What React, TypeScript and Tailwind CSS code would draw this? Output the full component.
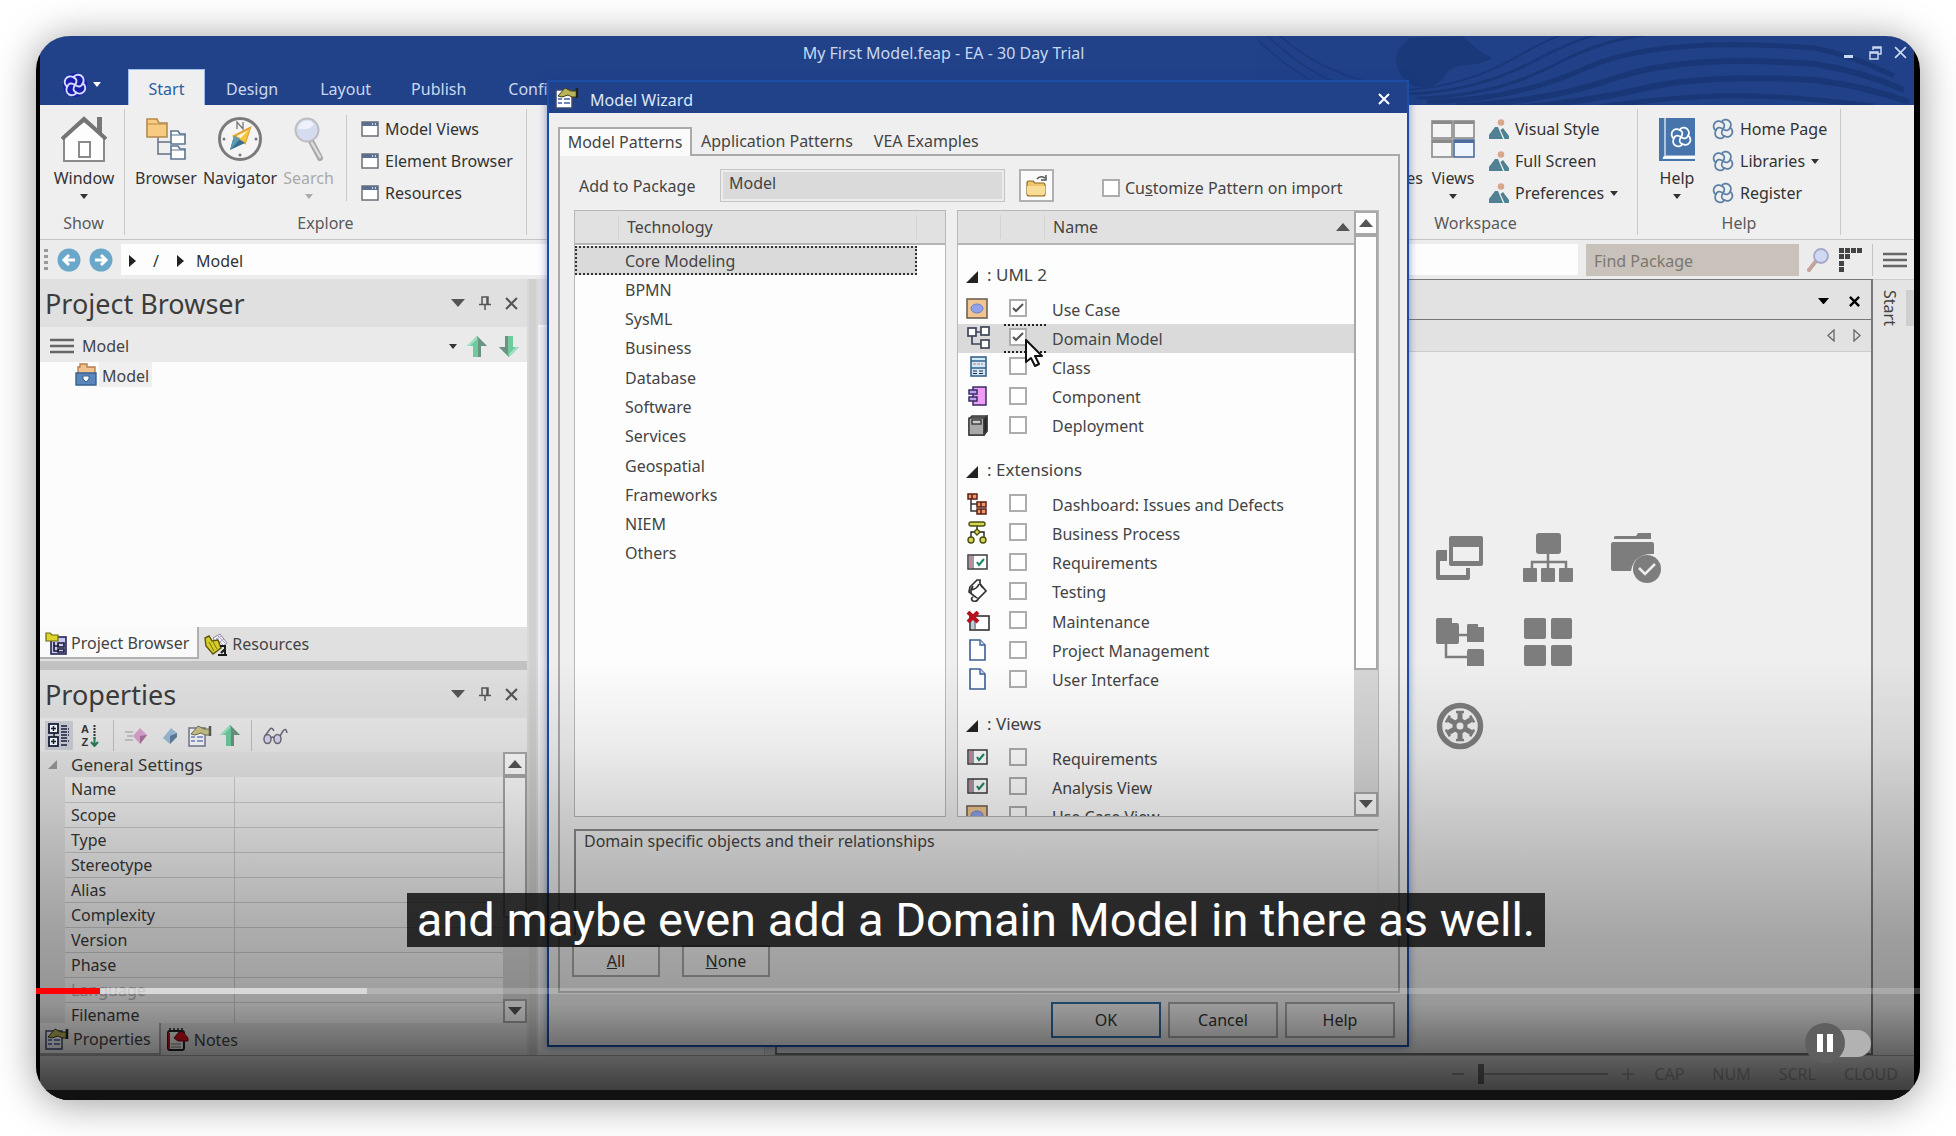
import React from "react";

type Kids = { children?: React.ReactNode };

/* ---------- icons ---------- */

const Logo = ({ color, size = 20, bg }: { color: string; size?: number; bg?: string }) => (
  <svg width={size} height={size} viewBox="0 0 20 20" fill="none" aria-hidden="true">
    {bg && <circle cx="10" cy="10" r="10" fill={bg} />}
    <g stroke={color} strokeWidth="1.6" strokeLinejoin="round" transform="rotate(-12 10 10)">
      <path d="M10 3.400A4 4 0 0 1 16.600 10A4 4 0 0 1 10 16.600A4 4 0 0 1 3.400 10A4 4 0 0 1 10 3.400Z" />
      <path d="M10 3.400Q14 6 10 10Q6 14 10 16.600M16.600 10Q14 14 10 10Q6 6 3.400 10" />
    </g>
  </svg>
);

const Caret = ({ className = "text-[#333]", w = 8 }: { className?: string; w?: number }) => (
  <svg width={w} height={w / 2 + 1} viewBox="0 0 8 5" className={className} preserveAspectRatio="none" aria-hidden="true">
    <path d="M0 0H8L4 5Z" fill="currentColor" />
  </svg>
);

const House = () => (
  <svg width="46" height="47" viewBox="0 0 46 47" aria-hidden="true">
    <rect x="36" y="1" width="5" height="17" fill="#777" />
    <path d="M3 21 23 5 43 21V45H3Z" fill="#fdfdfd" stroke="#8a8a8a" strokeWidth="2" />
    <path d="M1 23 23 3 45 23" fill="none" stroke="#747474" strokeWidth="4" />
    <rect x="18" y="26" width="11" height="15" fill="#fff" stroke="#8a8a8a" strokeWidth="2" />
  </svg>
);

const TreeFolders = () => (
  <svg width="40" height="42" viewBox="0 0 40 42" fill="none" aria-hidden="true">
    <path d="M12 19V36H25M12 24H25" stroke="#667085" strokeWidth="1.5" />
    <path d="M1 19V1H11L13 5H21V19Z" fill="#f8cb82" stroke="#b58a4c" strokeWidth="1.6" />
    <path d="M1 6H21" stroke="#b58a4c" strokeWidth="1.2" />
    <path d="M25 26V13H32L34 16H39V26ZM25 41V28H32L34 31H39V41Z" fill="#fff" stroke="#5b7592" strokeWidth="1.6" />
    <path d="M25 17H39M25 32H39" stroke="#5b7592" />
  </svg>
);

const Compass = () => (
  <svg width="46" height="46" viewBox="0 0 46 46" aria-hidden="true">
    <circle cx="23" cy="23" r="20.500" fill="#f4f4f4" stroke="#7b7b7b" strokeWidth="3" />
    <path d="M20 13V6L26 13V6" fill="none" stroke="#777" strokeWidth="1.300" />
    <circle cx="7" cy="23" r="1.500" fill="#777" />
    <circle cx="39" cy="23" r="1.500" fill="#777" />
    <circle cx="23" cy="39" r="1.500" fill="#777" />
    <path d="M33 12 17 20 23 23 28 27Z" fill="#fff6d8" stroke="#e6a02c" strokeWidth="2" />
    <path d="M23 23 33 12 28 27Z" fill="#f3c43c" />
    <path d="M13 34 17 20 28 27Z" fill="#33718f" />
    <path d="M17 20 23 23 13 34Z" fill="#5d9ab3" />
  </svg>
);

const BigSearch = () => (
  <svg width="30" height="46" viewBox="0 0 30 46" aria-hidden="true">
    <path d="M17 25 26 42" stroke="#a9a9a9" strokeWidth="6" strokeLinecap="round" />
    <path d="M18 27 26 41" stroke="#dedede" strokeWidth="2.500" strokeLinecap="round" />
    <circle cx="13" cy="14" r="11.500" fill="#d6dcf0" stroke="#bdbdc2" strokeWidth="2" />
    <path d="M4 13A9 9 0 0 1 20 8C14 16 9 12 4 13Z" fill="#eef1fa" />
  </svg>
);

const WinIcon = () => (
  <svg width="18" height="16" viewBox="0 0 18 16" aria-hidden="true">
    <rect x="1" y="1" width="16" height="14" fill="#fff" stroke="#6b6f78" strokeWidth="1.500" />
    <rect x="1" y="1" width="16" height="4" fill="#5b6f8f" />
    <path d="M11 3H12M14 3H15" stroke="#fff" strokeWidth="1.500" />
  </svg>
);

const ViewsIcon = () => (
  <svg width="44" height="38" viewBox="0 0 44 38" aria-hidden="true">
    {[[1, 1, "#8a8a8a", "#f4f4f4"], [23, 1, "#8a8a8a", "#f4f4f4"], [1, 20, "#8a8a8a", "#f4f4f4"], [23, 20, "#4b6c9c", "#eef4fd"]].map(([x, y, c, f]) => (
      <g key={`${x}-${y}`}>
        <rect x={x} y={y} width="20" height="17" fill={f as string} stroke={c as string} strokeWidth="1.600" />
        <rect x={x} y={y} width="20" height="3" fill={c as string} />
      </g>
    ))}
  </svg>
);

const Scenery = () => (
  <svg width="20" height="20" viewBox="0 0 20 20" aria-hidden="true">
    <circle cx="12" cy="3.500" r="3.300" fill="#d9a58b" />
    <path d="M0 20V16L6 8 9 8 14 20Z" fill="#4f8193" />
    <path d="M15.500 20 11.500 11 14 9 20 17V20Z" fill="#4f8193" />
  </svg>
);

const Book = () => (
  <svg width="36" height="43" viewBox="0 0 36 43" aria-hidden="true">
    <rect width="36" height="43" fill="#4775ab" />
    <path d="M6 0V38" stroke="#e8eef6" strokeWidth="1.300" />
    <path d="M36 38H7Q4 38 4 40.500H36" fill="#fff" stroke="#e8eef6" />
    <g transform="translate(11 8)"><Logo color="#fff" size={22} /></g>
  </svg>
);

const Cross = ({ size = 12, className = "text-[#444]", w = 2 }: { size?: number; className?: string; w?: number }) => (
  <svg width={size} height={size} viewBox="0 0 12 12" className={className} aria-hidden="true">
    <path d="M1 1 11 11M11 1 1 11" stroke="currentColor" strokeWidth={w} />
  </svg>
);

const Pin = () => (
  <svg width="12" height="14" viewBox="0 0 12 14" fill="none" stroke="#555" strokeWidth="1.500" aria-hidden="true">
    <path d="M3 8V1H9V8M0 8.500H12M6 9V14M8 1V8" />
  </svg>
);

const RoundArrow = ({ flip = false }: { flip?: boolean }) => (
  <svg width="24" height="24" viewBox="0 0 24 24" className={flip ? "rotate-180" : ""} aria-hidden="true">
    <circle cx="12" cy="12" r="11.500" fill="#6aa7c8" />
    <path d="M18 12H7M12 7 7 12 12 17" stroke="#fff" strokeWidth="3" fill="none" />
  </svg>
);

const Menu = () => (
  <svg width="24" height="16" viewBox="0 0 24 16" aria-hidden="true">
    <path d="M0 2H24M0 8H24M0 14H24" stroke="#666" strokeWidth="2.500" />
  </svg>
);

const GreenArrow = ({ down = false }: { down?: boolean }) => (
  <svg width="20" height="21" viewBox="0 0 20 21" className={down ? "rotate-180" : ""} aria-hidden="true">
    <path d="M10 0 20 10H14V21H6V10H0Z" fill="#6fcb9d" />
    <path d="M10 0 20 10H14V21H11V3Z" fill="#6c9282" />
    <path d="M10 0 0 10H3L10 3Z" fill="#9be3c2" />
  </svg>
);

const Briefcase = () => (
  <svg width="22" height="23" viewBox="0 0 22 23" aria-hidden="true">
    <path d="M3 12V4H5V1H12V4H20V12Z" fill="#f3c08f" stroke="#b57f4b" strokeWidth="1.400" />
    <path d="M1 10H21V22H1Z" fill="#5b86bd" stroke="#37618f" strokeWidth="1.400" />
    <path d="M8 13H14V16L11 19 8 16Z" fill="#fff" stroke="#37618f" />
  </svg>
);

const PropsIcon = ({ faded = false }: { faded?: boolean }) => (
  <svg width="24" height="22" viewBox="0 0 24 22" className={faded ? "opacity-70" : ""} aria-hidden="true">
    <rect x="1" y="3" width="16" height="18" fill="#fff" stroke="#3f4b6e" strokeWidth="1.500" />
    <path d="M3 12H7M3 16H7M9 12H15M9 16H15" stroke="#3d5fae" strokeWidth="1.600" />
    <path d="M3 9 10 1 16 4H22V10H17L13 8 7 10Z" fill="#b9b35a" stroke="#3d3b1a" />
    <path d="M22 1V11" stroke="#222" strokeWidth="2.500" />
  </svg>
);

const BrowserTabIcon = () => (
  <svg width="22" height="24" viewBox="0 0 22 24" aria-hidden="true">
    <rect x="6" y="6" width="15" height="17" fill="#c8c8f2" stroke="#232358" strokeWidth="1.600" />
    <path d="M1 10V2H5L7 4H13V10Z" fill="#ddd52c" stroke="#6c6910" strokeWidth="1.200" />
    <path d="M9 11V20H14M9 15H14M13 12H19V16H13ZM13 18H19V21H13Z" fill="none" stroke="#181830" strokeWidth="1.600" />
  </svg>
);

const ResourcesTabIcon = () => (
  <svg width="24" height="23" viewBox="0 0 24 23" aria-hidden="true">
    <path d="M9 5 16 1 23 10 15 16Z" fill="#f3f0fa" stroke="#8b86a8" />
    <path d="M12 5 19 12M14 3 21 10M11 8 17 3M13 11 20 6" stroke="#a9a4c4" />
    <path d="M1 5 5 3 8 8 14 7 17 15 9 21 2 13Z" fill="#d6cd2a" stroke="#5b580d" strokeWidth="1.400" />
    <path d="M5 9 10 18M9 9 13 16" stroke="#77730f" />
    <path d="M16 13H21V16L17 20M14 22H23M21 17V21" stroke="#1a1a1a" strokeWidth="2" fill="none" />
  </svg>
);

const NotesIcon = () => (
  <svg width="24" height="24" viewBox="0 0 24 24" aria-hidden="true">
    <rect x="2" y="3" width="16" height="19" rx="2" fill="#f6f6f6" stroke="#222" strokeWidth="2" />
    <path d="M4 3V0M8 3V0M12 3V0M16 3V0" stroke="#222" strokeWidth="1.500" />
    <path d="M5 16H15M5 19H15" stroke="#777" />
    <path d="M3 5V21" stroke="#d5101c" strokeWidth="2" />
    <path d="M8 10 13 4H17L22 10V13H12Z" fill="#d5101c" stroke="#7c0710" />
  </svg>
);

const FolderOpen = () => (
  <svg width="23" height="22" viewBox="0 0 23 22" aria-hidden="true">
    <path d="M2 19V8Q2 6 4 6H8L10 8H18Q20 8 20 10V19Q20 21 18 21H4Q2 21 2 19Z" fill="#efc46a" stroke="#8d6a22" strokeWidth="1.200" />
    <path d="M2 11H20V18Q20 20 18 20H4Q2 20 2 18Z" fill="#f9dc95" />
    <path d="M12 4Q15 0 20 3M21 0V5H16" fill="none" stroke="#555" strokeWidth="1.500" />
  </svg>
);

const SmallSearch = () => (
  <svg width="22" height="24" viewBox="0 0 22 24" aria-hidden="true">
    <path d="M9 13 2 22" stroke="#c3a59b" strokeWidth="4" strokeLinecap="round" />
    <circle cx="14" cy="8" r="7" fill="#cfd9f4" stroke="#a5a6c8" strokeWidth="1.800" />
  </svg>
);

const DotsCorner = () => (
  <svg width="23" height="24" viewBox="0 0 23 24" fill="#444" aria-hidden="true">
    {[[0, 0], [6, 0], [12, 0], [18, 0], [0, 6], [6, 6], [0, 13], [0, 19]].map(([x, y]) => (
      <rect key={`${x}-${y}`} x={x} y={y} width="5" height="5" />
    ))}
  </svg>
);

/* ---------- icons of the pattern list ---------- */

const UseCaseI = () => (
  <svg width="22" height="21" viewBox="0 0 22 21" aria-hidden="true">
    <rect x="1" y="1" width="20" height="19" fill="#f0c592" stroke="#6e6352" strokeWidth="1.600" />
    <ellipse cx="11" cy="10.500" rx="6" ry="4.500" fill="#8fa2ea" stroke="#6b7fd0" />
  </svg>
);
const DomainI = () => (
  <svg width="24" height="23" viewBox="0 0 24 23" fill="#fff" stroke="#3d4559" strokeWidth="1.700" aria-hidden="true">
    <path d="M6 9V18H15M9 6H15" fill="none" />
    <rect x="2" y="2" width="8" height="8" /><rect x="15" y="1" width="8" height="8" /><rect x="15" y="14" width="8" height="8" />
  </svg>
);
const ClassI = () => (
  <svg width="22" height="21" viewBox="0 0 22 21" aria-hidden="true">
    <rect x="5" y="1" width="15" height="19" fill="#cfe9f7" stroke="#37618c" strokeWidth="1.600" />
    <path d="M5 5H20M5 12H20" stroke="#37618c" strokeWidth="1.500" />
    <path d="M7 8H17" stroke="#c77" strokeDasharray="3 1" />
    <path d="M7 15H17M7 17.500H17" stroke="#224" strokeWidth="1.200" strokeDasharray="4 2" />
  </svg>
);
const ComponentI = () => (
  <svg width="22" height="20" viewBox="0 0 22 20" stroke="#3b2a66" strokeWidth="1.500" aria-hidden="true">
    <rect x="7" y="1" width="13" height="18" fill="#ee9df2" />
    <rect x="3" y="4" width="8" height="4" fill="#b9a4ee" /><rect x="3" y="11" width="8" height="4" fill="#b9a4ee" />
  </svg>
);
const DeployI = () => (
  <svg width="22" height="21" viewBox="0 0 22 21" stroke="#3a3a3a" strokeWidth="1.400" aria-hidden="true">
    <path d="M3 4 6 1H21V16L18 20H3Z" fill="#888" />
    <rect x="3" y="3" width="15" height="17" fill="#a9a9a9" /><rect x="6" y="5" width="9" height="4" fill="#ccc" />
    <path d="M18 4 21 1V16L18 20Z" fill="#222" />
  </svg>
);
const DashI = () => (
  <svg width="22" height="22" viewBox="0 0 22 22" fill="#ef9a6a" stroke="#5b1e12" strokeWidth="1.500" aria-hidden="true">
    <path d="M5 6V18H11M5 11H11" fill="none" stroke="#333" />
    <rect x="2" y="1" width="9" height="5" /><rect x="11" y="9" width="9" height="5" /><rect x="11" y="16" width="9" height="5" />
    <path d="M15 9V14M15 16V21M6 1V6" />
  </svg>
);
const BizI = () => (
  <svg width="22" height="23" viewBox="0 0 22 23" fill="#d5d84a" stroke="#4b4d14" strokeWidth="1.400" aria-hidden="true">
    <path d="M11 5V11M5 17V11H18V17" fill="none" stroke="#222" />
    <rect x="3" y="1" width="16" height="4" rx="2" /><path d="M11 8 14 11 11 14 8 11Z" />
    <circle cx="5" cy="19" r="3" /><circle cx="17" cy="19" r="3" />
  </svg>
);
const ReqI = () => (
  <svg width="22" height="17" viewBox="0 0 22 17" aria-hidden="true">
    <rect x="2" y="1" width="19" height="14" fill="#fff" stroke="#3b3b3b" strokeWidth="1.500" />
    <rect x="3" y="2" width="3" height="12" fill="#c583a7" />
    <path d="M7 1V15" stroke="#3b3b3b" />
    <path d="M11 8 13 11 18 5" fill="none" stroke="#23876b" strokeWidth="2.200" />
  </svg>
);
const TestI = () => (
  <svg width="22" height="24" viewBox="0 0 22 24" fill="#fff" stroke="#333" strokeWidth="1.700" aria-hidden="true">
    <path d="M4 8 11 1H14V5L20 12 12 20 3 13Z" /><path d="M5 11Q11 10 13 5M7 7 5 11V14M14 5 17 9" fill="none" />
    <path d="M12 20Q11 23 7 22Q4 20 7 18" />
  </svg>
);
const MaintI = () => (
  <svg width="24" height="20" viewBox="0 0 24 20" aria-hidden="true">
    <rect x="4" y="5" width="19" height="14" fill="#fff" stroke="#333" strokeWidth="1.600" />
    <path d="M5 6H8V18H5Z" fill="#b8cfe0" /><path d="M9 6V18" stroke="#333" />
    <path d="M2 1 12 11M12 1 2 11" stroke="#b8101e" strokeWidth="4" />
  </svg>
);
const DocI = () => (
  <svg width="22" height="22" viewBox="0 0 22 22" aria-hidden="true">
    <path d="M4 1H14L19 6V21H4Z" fill="#fff" stroke="#3c5f93" strokeWidth="1.600" />
    <path d="M14 1V6H19" fill="#c9dbf0" stroke="#3c5f93" strokeWidth="1.300" />
  </svg>
);

/* ---------- ribbon ---------- */

const RibbonBig = ({ icon, label, caret, muted, className = "" }: { icon: React.ReactNode; label: string; caret?: boolean; muted?: boolean; className?: string }) => (
  <button type="button" className={`flex flex-col items-center ${className}`}>
    <span className="flex h-12 items-center">{icon}</span>
    <span className={`mt-[3px] leading-6 ${muted ? "text-[#aaa]" : "text-[#333]"}`}>{label}</span>
    {caret && <span className="mt-1"><Caret className={muted ? "text-[#aaa]" : "text-[#333]"} /></span>}
  </button>
);

const RibbonSmall = ({ icon, label, caret }: { icon: React.ReactNode; label: string; caret?: boolean }) => (
  <button type="button" className="flex h-8 items-center gap-[6px] text-[#333]">
    {icon}<span>{label}</span>{caret && <Caret />}
  </button>
);

const Group = ({ label, children, className = "", labelClass = "" }: Kids & { label: string; className?: string; labelClass?: string }) => (
  <section aria-label={label} className={`my-1 flex shrink-0 flex-col border-r border-[#c9c9c9] ${className}`}>
    <div className="flex flex-1 items-start pt-[6px]">{children}</div>
    <div className={`text-center leading-6 text-[#5a5a5a] ${labelClass}`}>{label}</div>
  </section>
);

const Swirl = () => (
  <svg viewBox="0 0 660 69" preserveAspectRatio="none" className="absolute inset-y-0 right-0 h-full w-[35%]" fill="none" aria-hidden="true">
    <g stroke="#1a3877" strokeWidth="1.800" opacity=".75">
      <path d="M10 0Q60 50 130 62" /><path d="M22 0Q70 42 140 52" /><path d="M0 4Q60 62 130 69" />
    </g>
    <path d="M140 30C135 15 148 8 152 2L205 0C215 8 226 18 236 22C215 34 195 24 188 40C180 54 148 60 140 30Z" fill="#1a3877" opacity=".75" />
    <g stroke="#183573" opacity=".8">
      <path d="M150 54Q210 50 262 20T330 -4" strokeWidth="2" />
      <path d="M150 58Q220 56 280 24T370 -4" strokeWidth="2.500" />
      <path d="M160 62Q240 60 300 28T430 -4" strokeWidth="3" />
      <path d="M170 66Q260 64 330 32T560 12Q600 20 640 40" strokeWidth="5" />
      <path d="M200 70Q290 66 360 42T560 28Q610 36 650 54" strokeWidth="6" />
      <path d="M260 72Q330 66 390 52T560 44Q610 50 655 66" strokeWidth="6" />
      <path d="M330 73Q400 62 460 60T620 70" strokeWidth="5" />
    </g>
  </svg>
);

const TitleBar = () => (
  <header className="relative flex h-[69px] shrink-0 flex-col bg-[#214288] text-[#c9d8f2]">
    <Swirl />
    <div className="relative flex h-[33px] items-center">
      <div className="flex-1" />
      <h1 className="mr-[60px]">My First Model.feap - EA - 30 Day Trial</h1>
      <div className="flex flex-1 items-center justify-end gap-3 pr-[7px]">
        <button type="button" aria-label="Minimize" className="mt-2 mr-1 h-[3px] w-[9px] bg-[#c9d8f2]" />
        <button type="button" aria-label="Restore">
          <svg width="13" height="14" viewBox="0 0 13 14" fill="none" stroke="#c9d8f2" strokeWidth="1.500"><path d="M4 4V1H12V8H9M4 2H12M1 6H9V13H1ZM1 7H9" /></svg>
        </button>
        <button type="button" aria-label="Close"><Cross size={13} className="text-[#c9d8f2]" w={1.6} /></button>
      </div>
    </div>
    <nav className="relative flex h-9 items-stretch">
      <button type="button" aria-label="Application menu" className="flex w-22 items-center justify-center gap-[6px] pr-1 pb-[5px]">
        <Logo size={24} color="#d6dcff" bg="#1a1fa8" /><Caret className="text-white" />
      </button>
      <button type="button" className="w-[77px] border border-b-0 border-[#9dbdf0] bg-[#efefef] pt-[3px] text-[#27609f]">Start</button>
      <button type="button" className="ml-[21px] pt-[3px]">Design</button>
      <button type="button" className="ml-[42px] pt-[3px]">Layout</button>
      <button type="button" className="ml-10 pt-[3px]">Publish</button>
      <button type="button" className="ml-[42px] pt-[3px]">Configure</button>
    </nav>
  </header>
);

const Ribbon = () => (
  <div className="flex h-[135px] shrink-0 border-b border-[#c4c4c4] bg-[#efefef]">
    <Group label="Show" className="w-[85px]" labelClass="pl-[3px]"><RibbonBig className="w-full pl-1" icon={<House />} label="Window" caret /></Group>
    <Group label="Explore" className="w-[402px]">
      <div className="flex flex-1 gap-[6px] pl-[10px]">
        <RibbonBig icon={<TreeFolders />} label="Browser" />
        <RibbonBig icon={<Compass />} label="Navigator" />
        <RibbonBig icon={<BigSearch />} label="Search" caret muted />
      </div>
      <div className="flex h-[86px] w-[180px] flex-col border-l border-[#c9c9c9] pl-[14px]">
        <div className="-mt-[2px] flex flex-col">
          <RibbonSmall icon={<WinIcon />} label="Model Views" />
          <RibbonSmall icon={<WinIcon />} label="Element Browser" />
          <RibbonSmall icon={<WinIcon />} label="Resources" />
        </div>
      </div>
    </Group>
    <div className="flex-1" />
    <Group label="Workspace" className="w-[260px]" labelClass="pr-[64px]">
      <div className="flex w-full justify-end gap-[14px]">
        <div className="flex gap-2">
          <RibbonBig icon={<span />} label="Perspectives" />
          <RibbonBig icon={<ViewsIcon />} label="Views" caret />
        </div>
        <div className="-mt-[2px] flex w-[148px] shrink-0 flex-col">
          <RibbonSmall icon={<Scenery />} label="Visual Style" />
          <RibbonSmall icon={<Scenery />} label="Full Screen" />
          <RibbonSmall icon={<Scenery />} label="Preferences" caret />
        </div>
      </div>
    </Group>
    <Group label="Help" className="mr-[73px] w-[203px]">
      <RibbonBig className="ml-[21px]" icon={<Book />} label="Help" caret />
      <div className="-mt-[2px] ml-[17px] flex flex-col">
        <RibbonSmall icon={<Logo color="#5b7fa8" size={22} />} label="Home Page" />
        <RibbonSmall icon={<Logo color="#5b7fa8" size={22} />} label="Libraries" caret />
        <RibbonSmall icon={<Logo color="#5b7fa8" size={22} />} label="Register" />
      </div>
    </Group>
  </div>
);

const Crumbs = () => (
  <div className="flex h-[39px] shrink-0 items-center bg-[#ececec] pr-[7px]">
    <svg width="4" height="22" viewBox="0 0 4 22" className="ml-1 text-[#999]" fill="currentColor" aria-hidden="true">
      <path d="M0 0H4V3H0ZM0 6H4V9H0ZM0 12H4V15H0ZM0 18H4V21H0Z" />
    </svg>
    <button type="button" aria-label="Back" className="ml-[9px]"><RoundArrow /></button>
    <button type="button" aria-label="Forward" className="ml-2"><RoundArrow flip /></button>
    <nav aria-label="Package path" className="ml-2 flex h-[31px] flex-1 items-center bg-[#fdfdfd] pt-[2px] pl-2 text-[#333]">
      <svg width="7" height="12" viewBox="0 0 7 12" aria-hidden="true"><path d="M0 0 7 6 0 12Z" fill="#222" /></svg>
      <span className="w-8 pl-2 text-center">/</span>
      <svg width="7" height="12" viewBox="0 0 7 12" className="ml-[9px]" aria-hidden="true"><path d="M0 0 7 6 0 12Z" fill="#222" /></svg>
      <a href="#model" className="ml-3">Model</a>
    </nav>
    <input aria-label="Find Package" placeholder="Find Package" className="mx-2 h-8 w-[213px] bg-[#c9c2ba] pt-[2px] pl-2 placeholder:text-[#7c7771]" />
    <button type="button" aria-label="Find"><SmallSearch /></button>
    <button type="button" aria-label="Layout" className="mx-[10px]"><DotsCorner /></button>
    <button type="button" aria-label="Menu" className="flex h-8 items-center border-l border-[#c4c4c4] pl-[10px]"><Menu /></button>
  </div>
);

/* ---------- docked panels ---------- */

const PanelHeader = ({ title }: { title: string }) => (
  <div className="flex h-12 shrink-0 items-center bg-[#e0e0e0] pr-[9px] pl-[5px]">
    <h2 className="flex-1 text-[27px] leading-none text-[#3c3c3c]">{title}</h2>
    <div className="flex items-center gap-[14px]">
      <button type="button" aria-label={`${title} options`}><Caret w={14} className="text-[#555]" /></button>
      <button type="button" aria-label={`Pin ${title}`}><Pin /></button>
      <button type="button" aria-label={`Close ${title}`}><Cross size={13} className="text-[#555]" /></button>
    </div>
  </div>
);

const DockTab = ({ active, icon, children }: Kids & { active?: boolean; icon: React.ReactNode }) => (
  <button type="button" role="tab" aria-selected={!!active} className={`flex items-center gap-1 px-[5px] pt-[2px] text-[#444] ${active ? "border-r-2 border-b-2 border-[#b0b0b0] bg-[#fafafa] pr-2" : ""}`}>
    {icon}<span>{children}</span>
  </button>
);

const ProjectBrowser = () => (
  <section aria-label="Project Browser" className="flex shrink-0 flex-col bg-[#e0e0e0]">
    <PanelHeader title="Project Browser" />
    <div className="flex h-[35px] items-center bg-[#eaeaea] pt-[3px] pr-2 pl-[10px] text-[#444]">
      <Menu /><span className="ml-2 flex-1">Model</span>
      <Caret /><button type="button" aria-label="Move up" className="mr-3 ml-[10px]"><GreenArrow /></button>
      <button type="button" aria-label="Move down"><GreenArrow down /></button>
    </div>
    <ul className="h-[265px] bg-[#fcfcfc] pl-[35px]">
      <li className="flex items-center">
        <Briefcase /><button type="button" className="ml-[2px] h-[25px] bg-[#efefef] px-[3px] pt-[2px] leading-6 text-[#444]">Model</button>
      </li>
    </ul>
    <div role="tablist" className="flex h-8"><DockTab active icon={<BrowserTabIcon />}>Project Browser</DockTab><DockTab icon={<ResourcesTabIcon />}>Resources</DockTab></div>
    <div className="mt-[2px] h-[9px] bg-[#c2c2c2]" />
  </section>
);

const ScrollBar = ({ thumb, className = "" }: { thumb: string; className?: string }) => (
  <div className={`flex w-6 shrink-0 flex-col bg-[#d6d6d6] ${className}`}>
    <button type="button" aria-label="Scroll up" className="flex h-6 shrink-0 items-center justify-center border-2 border-[#a8a8a8] bg-[#fdfdfd]">
      <span className="rotate-180"><Caret w={14} className="text-[#555]" /></span>
    </button>
    <div className={`min-h-0 border-2 border-[#a8a8a8] bg-[#fdfdfd] ${thumb}`} />
    <div className="flex-1" />
    <button type="button" aria-label="Scroll down" className="flex h-6 shrink-0 items-center justify-center border-2 border-[#a8a8a8] bg-[#fdfdfd]">
      <Caret w={14} className="text-[#555]" />
    </button>
  </div>
);

const props = ["Name", "Scope", "Type", "Stereotype", "Alias", "Complexity", "Version", "Phase", "Language", "Filename"];

const Properties = () => (
  <section aria-label="Properties" className="flex min-h-0 flex-1 flex-col bg-[#e6e6e6]">
    <PanelHeader title="Properties" />
    <div className="flex h-[34px] shrink-0 items-center bg-[#ebebeb] pt-[1px] pl-[5px]">
      <button type="button" aria-label="Categorized" className="flex h-[29px] w-7 items-center justify-center bg-[#cfcfd8]">
        <svg width="22" height="25" viewBox="0 0 22 25" fill="none" stroke="#17203f">
          <path d="M6 9V16" strokeWidth="1.500" />
          <rect x="1" y="1" width="9" height="9" fill="#fff" strokeWidth="1.800" /><rect x="1" y="14" width="9" height="9" fill="#fff" strokeWidth="1.800" />
          <path d="M3 5.500H8M5.500 3V8M3 18.500H8M5.500 16V21" strokeWidth="1.500" />
          <path d="M13 3H19M13 6H21M13 9H21M13 12H21M13 15H19M13 18H21M13 22H19" strokeWidth="1.600" strokeDasharray="6 1" />
        </svg>
      </button>
      <button type="button" aria-label="Alphabetical" className="ml-2 flex items-center gap-[1px] text-[#333]">
        <span className="flex flex-col font-['Liberation_Sans',sans-serif] text-[11px] leading-[13px] font-bold"><span>A</span><span>Z</span></span>
        <svg width="9" height="22" viewBox="0 0 9 22"><path d="M4.500 0V14" stroke="#333" strokeWidth="2" strokeDasharray="2 1" /><path d="M4.500 12V20M1 17 4.500 21 8 17" stroke="#2a7f55" strokeWidth="2" fill="none" /></svg>
      </button>
      <span className="mr-[11px] ml-[14px] h-[31px] w-px bg-[#c0c0c0]" />
      <button type="button" aria-label="Add tag"><svg width="22" height="18" viewBox="0 0 22 18"><path d="M0 5H8M2 9H8M0 13H8" stroke="#bbb" strokeWidth="1.500" /><path d="M15 1 22 8 15 17 8 9Z" fill="#dca3cd" /><path d="M15 9 22 8 15 17Z" fill="#a8749b" /></svg></button>
      <button type="button" aria-label="Tag" className="ml-4"><svg width="14" height="18" viewBox="0 0 14 18"><path d="M8 1 14 6 7 17 0 11Z" fill="#9dbcd8" /><path d="M7 9 14 6V10L7 17Z" fill="#5d7f9e" /></svg></button>
      <button type="button" aria-label="Property pages" className="ml-[11px]"><PropsIcon faded /></button>
      <button type="button" aria-label="Raise" className="ml-2"><GreenArrow /></button>
      <span className="mx-[11px] h-[31px] w-px bg-[#c0c0c0]" />
      <button type="button" aria-label="View"><svg width="25" height="18" viewBox="0 0 25 18" fill="#d9d5f2" stroke="#6d6d7c" strokeWidth="1.500"><ellipse cx="4.500" cy="12" rx="3.500" ry="4.500" /><ellipse cx="14.500" cy="12" rx="3.500" ry="4.500" /><path d="M8 11Q9.500 9 11 11M2 9 7 2Q9 0 11 4M17 9 20 4Q23 0 24 6" fill="none" /></svg></button>
    </div>
    <div className="flex min-h-0 flex-1">
      <div className="min-h-0 flex-1 overflow-hidden">
        <table className="w-full table-fixed border-collapse text-[#3a3a3a]">
          <colgroup><col className="w-[25px]" /><col className="w-[169px]" /><col /></colgroup>
          <thead>
            <tr className="h-[25px]">
              <th className="p-0 pl-2"><svg width="9" height="9" viewBox="0 0 9 9" aria-hidden="true"><path d="M9 0V9H0Z" fill="#999" /></svg></th>
              <th colSpan={2} className="p-0 pl-[6px] text-left text-[17px] leading-6 font-normal">General Settings</th>
            </tr>
          </thead>
          <tbody>
            {props.map((p) => (
              <tr key={p} className="h-[25px]">
                <td className="p-0" />
                <td className={`border-r border-b border-[#cfcfcf] bg-[#f6f6f6] p-0 pl-[6px] leading-6 ${p === "Language" ? "text-[#b5b5b5]" : ""}`}>{p}</td>
                <td className="border-b border-[#cfcfcf] bg-[#f6f6f6] p-0" />
              </tr>
            ))}
          </tbody>
        </table>
      </div>
      <ScrollBar thumb="h-[142px]" />
    </div>
    <div role="tablist" className="flex h-8 shrink-0"><DockTab active icon={<PropsIcon />}>Properties</DockTab><DockTab icon={<NotesIcon />}>Notes</DockTab></div>
  </section>
);

/* ---------- document area ---------- */

const G = "#7d7d7d";
const launch: (React.ReactNode | null)[] = [
  <svg key="w" width="50" height="46" viewBox="0 0 50 46" fill={G}><path fillRule="evenodd" d="M16 1H46Q48 1 48 3V29Q48 31 46 31H16Q14 31 14 29V3Q14 1 16 1ZM18 12V26H44V12Z" /><path fillRule="evenodd" d="M12 15H3Q1 15 1 17V43Q1 45 3 45H33Q35 45 35 43V33H31V40H5V26H12Z" /></svg>,
  <svg key="h" width="50" height="50" viewBox="0 0 50 50" fill={G}><rect x="13" y="0" width="25" height="21" rx="3" /><path d="M25 20V36M9 36V29H43V36" fill="none" stroke={G} strokeWidth="2.500" /><rect x="0" y="35" width="14" height="14" rx="1" /><rect x="18" y="35" width="14" height="14" rx="1" /><rect x="36" y="35" width="14" height="14" rx="1" /></svg>,
  <svg key="f" width="50" height="50" viewBox="0 0 50 50" fill={G}><path d="M3 6V4Q3 3 5 3H25L27 0H40V6ZM2 9H41Q43 9 43 11V21Q23 20 20 38H2Q0 38 0 36V11Q0 9 2 9Z" /><circle cx="36" cy="36" r="14" /><path d="M28 35 34 41 44 31" fill="none" stroke="#eee" strokeWidth="2.500" /></svg>,
  <svg key="t" width="48" height="48" viewBox="0 0 48 48" fill={G}><path d="M2 0H16V5H21Q23 5 23 8V24Q23 26 21 26H2Q0 26 0 24V2Q0 0 2 0ZM32 6H42V9H48V24H31V7ZM32 31H46Q48 31 48 33V48H31V33Z" /><path d="M22 17H32M10 26V39H31" stroke={G} strokeWidth="2.500" fill="none" /></svg>,
  <svg key="g" width="48" height="48" viewBox="0 0 48 48" fill={G}><rect width="22" height="21" rx="2" /><rect x="27" width="21" height="21" rx="2" /><rect y="27" width="22" height="21" rx="2" /><rect x="27" y="27" width="21" height="21" rx="2" /></svg>,
  null,
  <svg key="s" width="48" height="48" viewBox="0 0 48 48" fill="none" stroke={G}><circle cx="24" cy="24" r="20.500" strokeWidth="5.500" />{[0, 60, 120, 180, 240, 300].map((a) => <g key={a} transform={`rotate(${a} 24 24)`}><path d="M24 19V11" strokeWidth="5" /><path d="M20 10H28" strokeWidth="2.500" /></g>)}<circle cx="24" cy="24" r="5.500" strokeWidth="4" /></svg>,
];

const DocArea = () => (
  <main className="flex min-w-0 flex-1 bg-[#e2e2e2]">
    <div className="flex w-[226px] flex-col bg-[#f0f0f0]"><div className="h-12 border-b-2 border-[#f8f8f8] bg-[#dedee4]" /></div>
    <div className="w-[11px] border-l border-[#ccc]" />
    <div className="flex flex-1 flex-col border-2 border-t border-[#777]">
      <div className="flex h-10 items-center justify-end gap-5 border-b border-[#777] pt-[3px] pr-[11px]">
        <button type="button" aria-label="Window list"><Caret w={11} className="text-black" /></button>
        <button type="button" aria-label="Close document"><Cross size={11} className="text-black" w={2.6} /></button>
      </div>
      <div className="flex h-8 items-center justify-end gap-[18px] border-b border-[#ccc] pr-[10px]">
        <button type="button" aria-label="Previous"><svg width="8" height="13" viewBox="0 0 8 13"><path d="M7 1V12L1 6.500Z" fill="none" stroke="#666" strokeWidth="1.300" /></svg></button>
        <button type="button" aria-label="Next"><svg width="8" height="13" viewBox="0 0 8 13"><path d="M1 1V12L7 6.500Z" fill="none" stroke="#666" strokeWidth="1.300" /></svg></button>
      </div>
      <div className="flex flex-1 justify-end bg-[#efefef] pt-[164px] pr-[191px]">
        <div className="grid h-[252px] w-[264px] grid-cols-3 grid-rows-3 items-center justify-items-center">
          {launch.map((x, i) => x ? <button key={i} type="button" aria-label={`Shortcut ${i + 1}`}>{x}</button> : <span key={i} />)}
        </div>
      </div>
    </div>
    <div className="flex w-[41px] items-start border-t border-[#ccc] bg-[#e4e4e4] pt-[10px]">
      <button type="button" className="flex-1 text-[#444] [writing-mode:vertical-rl]">Start</button>
      <span className="h-9 w-2 bg-[#cfcfcf]" />
    </div>
  </main>
);

/* ---------- model wizard dialog ---------- */

const Check = ({ label, checked = false }: { label?: string; checked?: boolean }) => (
  <span className="grid shrink-0 place-items-center">
    <input type="checkbox" aria-label={label} defaultChecked={checked} className="peer col-start-1 row-start-1 size-[18px] appearance-none border-2 border-[#adadad] bg-white" />
    <svg width="12" height="10" viewBox="0 0 12 10" className="pointer-events-none col-start-1 row-start-1 hidden peer-checked:block" aria-hidden="true">
      <path d="M1 5 4 8 11 1" fill="none" stroke="#555" strokeWidth="2" />
    </svg>
  </span>
);

const techs = ["Core Modeling", "BPMN", "SysML", "Business", "Database", "Software", "Services", "Geospatial", "Frameworks", "NIEM", "Others"];

type Item = [string, React.FC, boolean?];
const groups: { name: string; rows: string; items: Item[] }[] = [
  { name: "UML 2", rows: "h-[146px] grid-rows-5", items: [["Use Case", UseCaseI, true], ["Domain Model", DomainI, true], ["Class", ClassI], ["Component", ComponentI], ["Deployment", DeployI]] },
  { name: "Extensions", rows: "h-[205px] grid-rows-7", items: [["Dashboard: Issues and Defects", DashI], ["Business Process", BizI], ["Requirements", ReqI], ["Testing", TestI], ["Maintenance", MaintI], ["Project Management", DocI], ["User Interface", DocI]] },
  { name: "Views", rows: "h-[87px] grid-rows-3", items: [["Requirements", ReqI], ["Analysis View", ReqI], ["Use Case View", UseCaseI]] },
];

const Cursor = () => (
  <svg width="20" height="29" viewBox="0 0 20 29" className="absolute top-[15px] left-[66px] z-10" aria-hidden="true">
    <path d="M2 1V23L7 19 11 27 15 25 11 17H18Z" fill="#fff" stroke="#111" strokeWidth="2" strokeLinejoin="round" />
  </svg>
);

const PatternList = () => (
  <div className="flex w-[422px] border border-[#b8b8b8] bg-[#fdfdfd]">
    <div className="flex min-w-0 flex-1 flex-col">
      <div className="flex h-[34px] shrink-0 items-center border-b-2 border-[#b5b5b5] bg-[#e1e1e1] text-[#444]">
        <span className="h-6 w-[43px] border-r border-[#d2d2d2]" /><span className="h-6 w-11 border-r border-[#d2d2d2]" />
        <span className="flex-1 pl-2">Name</span>
        <span className="mr-1 rotate-180"><Caret w={14} className="text-[#555]" /></span>
      </div>
      <div className="h-[571px] overflow-hidden pt-[1px] text-[#444]">
        {groups.map((g) => (
          <section key={g.name} aria-label={g.name}>
            <h3 className="flex h-[49px] items-center gap-[9px] pt-[9px] pl-2 text-[17px]">
              <svg width="12" height="12" viewBox="0 0 12 12" className="mt-1" aria-hidden="true"><path d="M12 0V12H0Z" fill="#222" /></svg>
              <span>: {g.name}</span>
            </h3>
            <ul className={`grid ${g.rows}`}>
              {g.items.map(([label, Icon, on]) => {
                const sel = label === "Domain Model";
                return (
                  <li key={label} className={`relative flex items-center ${sel ? "bg-[#dadada]" : ""}`}>
                    <label className="flex flex-1 items-center">
                      <span className="flex w-[46px] justify-start pb-[2px] pl-2"><Icon /></span>
                      <span className={`flex h-[29px] w-[42px] items-center pb-[3px] pl-[5px] ${sel ? "border-y-2 border-dotted border-[#222]" : ""}`}><Check checked={!!on} /></span>
                      <span className="pl-[6px]">{label}</span>
                    </label>
                    {sel && <Cursor />}
                  </li>
                );
              })}
            </ul>
          </section>
        ))}
      </div>
    </div>
    <ScrollBar thumb="h-[435px]" />
  </div>
);

const DlgButton = ({ children, className = "" }: Kids & { className?: string }) => (
  <button type="button" className={`border-2 bg-[#f4f4f4] text-[#333] ${className}`}>{children}</button>
);

const Wizard = () => (
  <div role="dialog" aria-label="Model Wizard" className="absolute top-11 left-[507px] flex h-[967px] w-[862px] flex-col border-2 border-[#1c4ea6] bg-[#efefef] shadow-[0_0_8px_rgba(20,60,140,0.5)]">
    <div className="flex h-[31px] shrink-0 items-center bg-[#214288] pr-[17px] pl-1 text-[#dce8fb]">
      <div className="flex items-center gap-[11px] pl-[2px]"><PropsIcon /><h2 className="pt-1">Model Wizard</h2></div>
      <button type="button" aria-label="Close wizard" className="ml-auto pt-[3px]"><Cross className="text-white" /></button>
    </div>
    <div role="tablist" className="mt-[14px] ml-[9px] flex h-[27px] text-[#444]">
      <button type="button" role="tab" aria-selected="true" className="relative z-1 -mb-[2px] h-[29px] w-[134px] border-2 border-b-0 border-[#aaa] bg-[#fbfbfb] pb-[2px]">Model Patterns</button>
      <button type="button" role="tab" aria-selected="false" className="ml-[9px]">Application Patterns</button>
      <button type="button" role="tab" aria-selected="false" className="ml-[21px]">VEA Examples</button>
    </div>
    <div className="mr-[7px] ml-[9px] flex h-[839px] shrink-0 flex-col border-2 border-[#aaa] pt-[13px] pr-[19px] pl-[14px]">
      <div className="flex items-center text-[#444]">
        <label htmlFor="pkg" className="w-[146px] pl-[5px]">Add to Package</label>
        <input id="pkg" readOnly value="Model" className="h-[33px] w-[285px] border border-[#c4c4c4] bg-[#dadada] pb-[5px] pl-2 outline-2 -outline-offset-3 outline-[#ececec]" />
        <button type="button" aria-label="Choose package" className="ml-[14px] flex h-[33px] w-[35px] items-center justify-center border-2 border-[#b0b0b0] bg-[#fbfbfb]"><FolderOpen /></button>
        <label className="ml-12 flex items-center gap-[5px] pt-1"><Check /><span>Cu<u>s</u>tomize Pattern on import</span></label>
      </div>
      <div className="mt-2 flex h-[607px] shrink-0 justify-between">
        <div className="flex w-[372px] flex-col border border-[#b8b8b8] bg-[#fdfdfd] text-[#444]">
          <div className="flex h-[34px] shrink-0 items-center border-b-2 border-[#b5b5b5] bg-[#e1e1e1]">
            <span className="h-6 w-[44px] border-r border-[#d2d2d2]" />
            <span className="flex h-6 w-[298px] items-center border-r border-[#d2d2d2] pl-2">Technology</span>
          </div>
          <ul className="mt-[1px] grid h-[322px] w-[342px] grid-rows-11">
            {techs.map((t, i) => (
              <li key={t} className="flex">
                <button type="button" className={`flex-1 text-left ${i === 0 ? "border-2 border-dotted border-[#333] bg-[#dadada] pl-[48px]" : "pl-[50px]"}`}>{t}</button>
              </li>
            ))}
          </ul>
        </div>
        <PatternList />
      </div>
      <p className="mt-3 h-[106px] border-t-2 border-r-2 border-l-2 border-t-[#8a8a8a] border-r-[#e8e8e8] border-l-[#8a8a8a] pl-2 leading-5 text-[#444]">Domain specific objects and their relationships</p>
      <div className="mt-[10px] -ml-[2px] flex gap-[22px]">
        <DlgButton className="h-8 w-22 border-[#a8a8a8]"><u>A</u>ll</DlgButton>
        <DlgButton className="h-8 w-22 border-[#a8a8a8]"><u>N</u>one</DlgButton>
      </div>
    </div>
    <div className="mt-[9px] mr-3 flex justify-end gap-[7px]">
      <DlgButton className="h-9 w-[110px] border-[#2f6ea8]">OK</DlgButton>
      <DlgButton className="h-9 w-[110px] border-[#a8a8a8]">Cancel</DlgButton>
      <DlgButton className="h-9 w-[110px] border-[#a8a8a8]">Help</DlgButton>
    </div>
  </div>
);

const StatusBar = () => (
  <footer className="flex h-[35px] shrink-0 items-center justify-end border-t border-[#aaa] bg-[#e2e2e2] pt-[2px] pr-4 text-[#aaa]">
    <span className="h-[2px] w-3 bg-[#aaa]" />
    <input type="range" aria-label="Zoom" min="0" max="100" defaultValue="0" className="mx-[14px] h-5 w-[130px] appearance-none bg-[linear-gradient(#aaa,#aaa)] bg-[length:100%_2px] bg-center bg-no-repeat [&::-webkit-slider-thumb]:h-5 [&::-webkit-slider-thumb]:w-[6px] [&::-webkit-slider-thumb]:appearance-none [&::-webkit-slider-thumb]:bg-[#777]" />
    <svg width="12" height="12" viewBox="0 0 12 12" aria-hidden="true"><path d="M0 6H12M6 0V12" stroke="#aaa" strokeWidth="1.500" /></svg>
    <span className="ml-5">CAP</span><span className="ml-7">NUM</span><span className="ml-7">SCRL</span><span className="ml-7">CLOUD</span>
  </footer>
);

/* ---------- player chrome ---------- */

const PlayerOverlay = () => (
  <>
    <div className="pointer-events-none absolute inset-x-0 bottom-0 h-[440px] bg-[linear-gradient(to_bottom,rgba(0,0,0,0)_0%,rgba(0,0,0,0.07)_20%,rgba(0,0,0,0.2)_43%,rgba(0,0,0,0.3)_62%,rgba(0,0,0,0.36)_78%,rgba(0,0,0,0.43)_82%,rgba(0,0,0,0.58)_90%,rgba(0,0,0,0.73)_98%)]" />
    <div className="pointer-events-none absolute inset-x-0 bottom-0 h-[10px] bg-[#111]" />
    <div className="absolute inset-x-0 bottom-[153px] flex justify-center pr-1">
      <p className="bg-[#080808]/80 px-[10px] font-[Roboto] text-[47px] leading-[54px] text-white">and maybe even add a Domain Model in there as well.</p>
    </div>
    <div role="progressbar" aria-label="Playback" aria-valuenow={3} className="absolute inset-x-0 bottom-[106px] flex h-[6px] bg-white/20">
      <span className="w-[64px] bg-[#f00]" /><span className="w-[267px] bg-white/50" />
    </div>
    <button type="button" role="switch" aria-checked="false" aria-label="Autoplay" className="absolute right-[49px] bottom-[37px] flex h-10 w-[66px] items-center">
      <span className="ml-auto h-[27px] w-[46px] rounded-full bg-[#b2b2b2]" />
      <span className="absolute left-0 flex size-10 items-center justify-center gap-1 rounded-full bg-[#5f5f5f]">
        <span className="h-[18px] w-[6px] bg-white" /><span className="h-[18px] w-[6px] bg-white" />
      </span>
    </button>
  </>
);

export default function App() {
  return (
    <div className="flex min-h-screen bg-white p-9 font-['Noto_Sans',sans-serif] text-base leading-6">
      <div className="relative flex min-w-0 flex-1 overflow-hidden rounded-[34px] bg-black pr-[6px] pb-[10px] pl-1 shadow-[0_3px_40px_rgba(0,0,0,0.4)]">
        <div className="relative flex min-w-0 flex-1 flex-col overflow-hidden bg-[#e2e2e2]">
          <TitleBar />
          <Ribbon />
          <Crumbs />
          <div className="flex h-[776px]">
            <div className="flex w-[487px] shrink-0 flex-col"><ProjectBrowser /><Properties /></div>
            <div className="w-[11px] shrink-0 border-x-2 border-[#d8d8d8] bg-[#d0d0d0]" />
            <DocArea />
          </div>
          <StatusBar />
          <Wizard />
        </div>
        <PlayerOverlay />
      </div>
    </div>
  );
}
